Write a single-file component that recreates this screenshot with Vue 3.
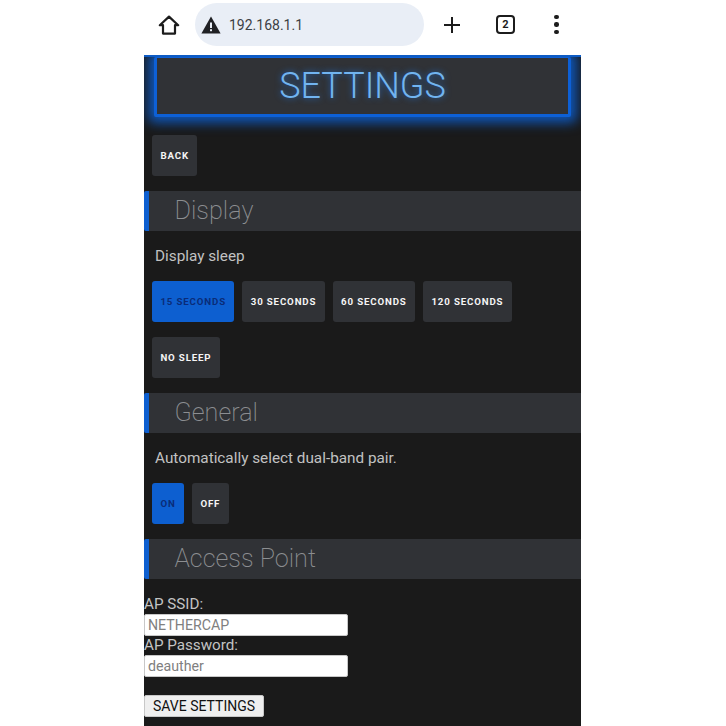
<template>
  <div class="phone">
    <header class="toolbar">
      <svg class="home" width="24" height="24" viewBox="0 0 24 24">
        <path d="M12 3.6 2.8 12.2H6v8.4h12v-8.4h3.2z" fill="none" stroke="#1c1c1c" stroke-width="2.2" stroke-linejoin="round" />
      </svg>
      <div class="omnibox">
        <svg width="20" height="18" viewBox="0 0 20 18">
          <path d="M10 0.5 19.6 17.5H0.4z" fill="#202124" />
          <rect x="9" y="6.5" width="2" height="5.5" fill="#e9eef6" />
          <rect x="9" y="13.2" width="2" height="2" fill="#e9eef6" />
        </svg>
        <span class="url">192.168.1.1</span>
      </div>
      <svg class="plus" width="18" height="18" viewBox="0 0 18 18">
        <path d="M9 1v16M1 9h16" stroke="#1c1c1c" stroke-width="2" />
      </svg>
      <div class="tabs">2</div>
      <div class="dots"><i></i><i></i><i></i></div>
    </header>

    <main class="page">
      <div class="banner">SETTINGS</div>

      <div class="btn-row back-row">
        <button class="btn">BACK</button>
      </div>

      <h2 class="section">Display</h2>
      <p class="desc">Display sleep</p>
      <div class="btn-row">
        <button v-for="s in sleepOptions" :key="s" class="btn" :class="{ active: s === '15 SECONDS' }">{{ s }}</button>
      </div>

      <h2 class="section general">General</h2>
      <p class="desc">Automatically select dual-band pair.</p>
      <div class="btn-row">
        <button class="btn active">ON</button>
        <button class="btn">OFF</button>
      </div>

      <h2 class="section access">Access Point</h2>
      <form class="ap-form" @submit.prevent>
        <label for="ssid">AP SSID:</label>
        <input id="ssid" type="text" placeholder="NETHERCAP" />
        <label for="pass">AP Password:</label>
        <input id="pass" type="text" placeholder="deauther" />
        <button class="save">SAVE SETTINGS</button>
      </form>
    </main>
  </div>
</template>

<script setup>
const sleepOptions = ["15 SECONDS", "30 SECONDS", "60 SECONDS", "120 SECONDS", "NO SLEEP"];
</script>

<style>
html,
body {
  background: #fff;
  overflow: hidden;
}
</style>

<style scoped>
.phone {
  width: 437px;
  height: 726px;
  margin-left: 144px;
  overflow: hidden;
  font-family: Roboto, "Liberation Sans", sans-serif;
}

.toolbar {
  height: 55px;
  display: flex;
  align-items: center;
  background: #fff;
  padding-bottom: 6px;
  box-sizing: border-box;
}
.home {
  margin-left: 13px;
}
.omnibox {
  width: 229px;
  height: 43px;
  margin-left: 14px;
  padding-left: 6px;
  box-sizing: border-box;
  display: flex;
  align-items: center;
  gap: 8px;
  border-radius: 22px;
  background: #e9eef6;
}
.url {
  font-size: 14px;
  color: #3c4043;
}
.plus {
  margin-left: 19px;
}
.tabs {
  width: 19px;
  height: 19px;
  box-sizing: border-box;
  margin-left: 35px;
  border: 2px solid #1c1c1c;
  border-radius: 4px;
  text-align: center;
  font-size: 11px;
  font-weight: 700;
  line-height: 15px;
  color: #1c1c1c;
}
.dots {
  margin-left: 39px;
  display: flex;
  flex-direction: column;
  gap: 3px;
}
.dots i {
  width: 4.5px;
  height: 4.5px;
  border-radius: 50%;
  background: #1c1c1c;
}

.page {
  height: 671px;
  background: #1a1a1a;
  border-top: 2px solid #0d5bc4;
  overflow: hidden;
}

.banner {
  height: 56px;
  margin: 0 10px;
  text-align: center;
  font-size: 36px;
  font-weight: 300;
  line-height: 56px;
  color: #71b4f0;
  background: #303236;
  border: 3px solid #0d60d6;
  border-top-width: 1px;
  border-radius: 2px;
  text-shadow: 0 0 6px rgba(30, 120, 230, 0.8);
  box-shadow: 0 0 12px 6px rgba(13, 95, 208, 0.85);
}

.btn-row {
  display: flex;
  flex-wrap: wrap;
  gap: 15px 8px;
  padding-left: 8px;
}
.back-row {
  margin-top: 18px;
}
.btn {
  height: 41px;
  padding: 0 8.4px 1px;
  border: none;
  border-radius: 3px;
  background: #303236;
  color: #f5f5f5;
  font-family: inherit;
  font-size: 9.7px;
  font-weight: 700;
  letter-spacing: 0.85px;
}
.btn.active {
  background: #0d5fd0;
  color: #0a2c78;
}

.section {
  height: 40px;
  margin: 15px 0 0;
  padding-left: 25.5px;
  border-left: 5px solid #0d5fd0;
  border-radius: 2px 0 0 2px;
  background: #303236;
  color: #8c8e91;
  font-size: 25.2px;
  font-weight: 200;
  line-height: 40px;
}
.desc {
  height: 18px;
  margin: 17px 0 15px 11px;
  color: #c2c2c2;
  font-size: 15.3px;
  line-height: 17px;
}

.ap-form {
  display: flex;
  flex-direction: column;
  align-items: flex-start;
  padding-top: 17px;
  color: #c4c4c4;
  font-size: 15.2px;
}
.ap-form label {
  height: 18px;
  line-height: 17px;
}
.ap-form input {
  width: 204px;
  height: 22px;
  margin-bottom: 1px;
  padding: 0 3px;
  box-sizing: border-box;
  border: 1px solid #c8c8c8;
  border-radius: 2px;
  background: #fff;
  font-family: inherit;
  font-size: 14.2px;
  outline: none;
}
.ap-form input::placeholder {
  color: #808080;
  opacity: 1;
}
.save {
  width: 120px;
  height: 22px;
  margin-top: 17px;
  padding: 0;
  border: 1px solid #c8c8c8;
  border-radius: 2px;
  background: #efefef;
  color: #111;
  font-family: inherit;
  font-size: 14px;
}
</style>
